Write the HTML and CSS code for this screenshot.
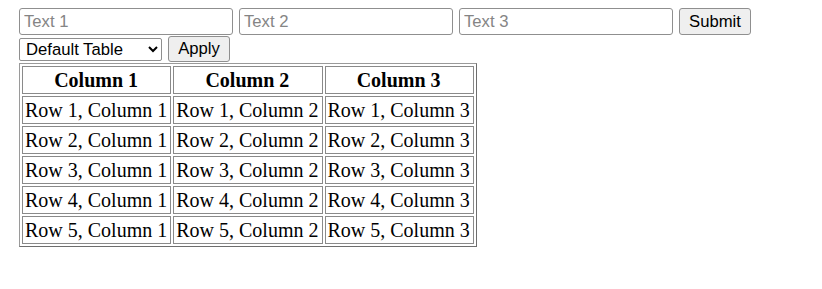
FILE: index.html
```html
<!DOCTYPE html>
<html>
<head>
<meta charset="utf-8">
<link rel="stylesheet" href="styles.css">
</head>
<body>
<div class="page">
  <form class="row row-top">
    <input class="field" type="text" placeholder="Text 1">
    <input class="field" type="text" placeholder="Text 2">
    <input class="field" type="text" placeholder="Text 3">
    <button class="btn btn-submit" type="button">Submit</button>
  </form>
  <div class="row row-filter">
    <select class="picker">
      <option>Default Table</option>
      <option>Sorted Table</option>
    </select>
    <button class="btn btn-apply" type="button">Apply</button>
  </div>
  <table class="grid">
    <thead>
      <tr><th>Column 1</th><th>Column 2</th><th>Column 3</th></tr>
    </thead>
    <tbody>
      <tr><td>Row 1, Column 1</td><td>Row 1, Column 2</td><td>Row 1, Column 3</td></tr>
      <tr><td>Row 2, Column 1</td><td>Row 2, Column 2</td><td>Row 2, Column 3</td></tr>
      <tr><td>Row 3, Column 1</td><td>Row 3, Column 2</td><td>Row 3, Column 3</td></tr>
      <tr><td>Row 4, Column 1</td><td>Row 4, Column 2</td><td>Row 4, Column 3</td></tr>
      <tr><td>Row 5, Column 1</td><td>Row 5, Column 2</td><td>Row 5, Column 3</td></tr>
    </tbody>
  </table>
</div>
</body>
</html>
```
FILE: styles.css
```css
html, body {
  margin: 0;
  padding: 0;
  background: #ffffff;
}

.page {
  padding: 8px 0 0 19px;
  font-family: "Liberation Serif", "Times New Roman", serif;
  color: #000;
}

.row {
  display: flex;
  margin: 0;
}

.row-top {
  gap: 6px;
  height: 27px;
}

.row-filter {
  gap: 6px;
  height: 26px;
  margin-top: 1px;
  align-items: center;
}

.field {
  box-sizing: border-box;
  width: 214px;
  height: 27px;
  margin: 0;
  padding: 1px 4px;
  border: 1px solid #8f8f8f;
  border-radius: 3px;
  font-family: "Liberation Sans", Arial, sans-serif;
  font-size: 16.67px;
  color: #000;
  background: #fff;
  outline: none;
}

.field::placeholder {
  color: #858585;
}

.btn {
  box-sizing: border-box;
  margin: 0;
  padding: 0;
  border: 1px solid #8f8f8f;
  border-radius: 3px;
  background: #efefef;
  font-family: "Liberation Sans", Arial, sans-serif;
  font-size: 16.67px;
  color: #000;
}

.btn-submit {
  width: 72px;
  height: 27px;
}

.btn-apply {
  width: 62px;
  height: 26px;
}

.picker {
  box-sizing: border-box;
  width: 143px;
  height: 23px;
  margin: 0;
  padding: 0 0 0 2px;
  border: 1px solid #8f8f8f;
  border-radius: 2px;
  background: #fff;
  font-family: "Liberation Sans", Arial, sans-serif;
  font-size: 16.67px;
  color: #000;
}

.grid {
  margin-top: 1px;
  border: 1px solid #9a9a9a;
  border-right-color: #6e6e6e;
  border-bottom-color: #6e6e6e;
  border-spacing: 2px;
  font-size: 20px;
  line-height: 24px;
}

.grid th,
.grid td {
  padding: 1px 3px 1px 2px;
  border: 1px solid #8a8a8a;
  white-space: nowrap;
}

.grid th {
  font-weight: bold;
  text-align: center;
}

.grid td {
  text-align: left;
}
```
